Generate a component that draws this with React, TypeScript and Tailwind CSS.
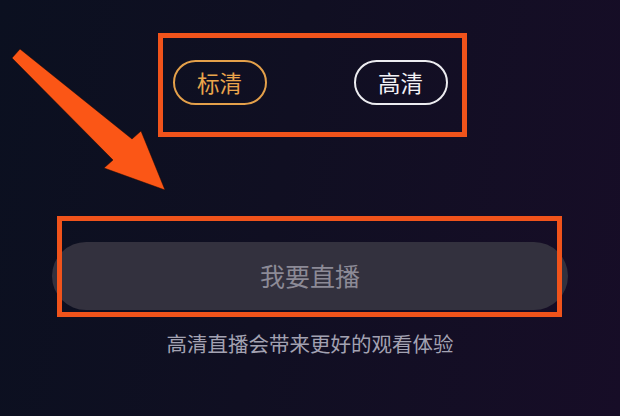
export default function App() {
  return (
    <div className="relative flex h-[416px] w-[620px] flex-col items-center overflow-hidden bg-[linear-gradient(100deg,#0b1020_0%,#100f22_45%,#170d27_100%)] font-['Noto_Sans_CJK_SC','Noto_Sans',sans-serif]">
      {/* quality options */}
      <div className="mt-[60px] flex items-center gap-[87px]">
        <button className="grid h-[45px] w-[94px] place-items-center rounded-full border-2 border-[#e4a04a] text-[22.5px] leading-none text-[#eaa54c]">标清</button>
        <button className="grid h-[45px] w-[94px] place-items-center rounded-full border-2 border-[#ececf0] text-[22.5px] leading-none text-[#f2f2f5]">高清</button>
      </div>

      <button className="mt-[137px] h-[68px] w-[516px] rounded-full bg-[#33313e] text-[25px] text-[#8c8a96]">我要直播</button>
      <p className="mt-[19px] text-[20.5px] leading-[28px] text-[#a3a2b2]">高清直播会带来更好的观看体验</p>

      {/* annotations */}
      <div className="pointer-events-none absolute left-[158px] top-[33px] h-[104px] w-[309px] border-[5px] border-[#f0531b]" />
      <div className="pointer-events-none absolute left-[57px] top-[216px] h-[101px] w-[505px] border-[5px] border-[#f0531b]" />
      <svg className="pointer-events-none absolute left-0 top-0" width="620" height="416" viewBox="0 0 620 416">
        <polygon
          points="12,58 20,49 132,139 141,131 165,190 104,168 113,160"
          fill="#fb5616"
          stroke="#1a0a08"
          strokeOpacity="0.5"
          strokeWidth="1"
          strokeLinejoin="round"
        />
      </svg>
    </div>
  )
}
